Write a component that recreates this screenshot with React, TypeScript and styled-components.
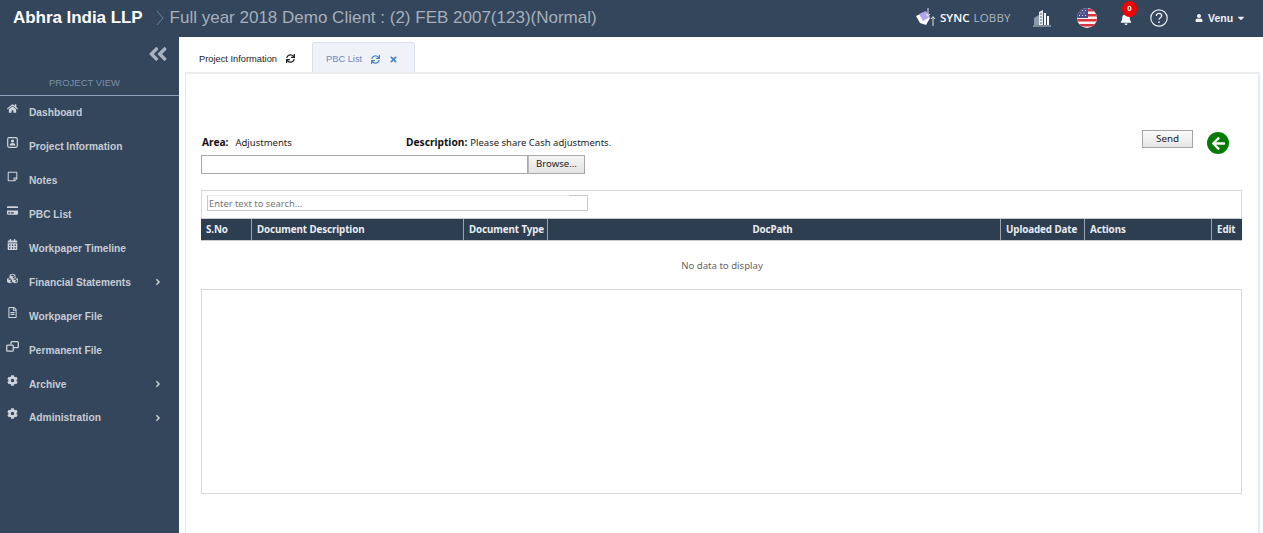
import React from "react";
import styled, { createGlobalStyle } from "styled-components";
import {
  FaHome, FaRegStickyNote, FaCreditCard, FaCalendarAlt, FaCubes, FaRegFileAlt, FaCog,
  FaAngleRight, FaSync, FaTimes, FaUser, FaCaretDown, FaBell, FaAngleDoubleLeft, FaArrowLeft,
} from "react-icons/fa";

const Global = createGlobalStyle`
  html, body { margin: 0; padding: 0; height: 100%; background: #fff; overflow: hidden; }
  #root { height: 533px; }
  * { box-sizing: border-box; }
`;

const Page = styled.div`
  width: 1263px; height: 533px; display: grid; grid-template-rows: 37px 1fr; overflow: hidden;
  font-family: "Liberation Sans", Arial, sans-serif;
`;
const TopBar = styled.header`
  background: #33465c; display: flex; align-items: center; padding: 0 0 2px 13px;
`;
const Brand = styled.div`
  color: #fff; font-size: 17px; font-weight: 700; letter-spacing: -0.05px; white-space: nowrap;
`;
const Crumb = styled.div`
  color: #a6afba; font-size: 17px; margin-left: 13px; display: flex; align-items: center; gap: 6px; white-space: nowrap;
`;
const Tools = styled.div`
  margin-left: auto; display: flex; align-items: center; height: 100%; color: #fff;
`;
const Logo = styled.div`
  display: flex; align-items: center; width: 116px; gap: 2px; font-size: 11.5px; font-family: "Open Sans", sans-serif;
  color: #fff; white-space: nowrap;
  b { font-weight: 600; }
  span { color: #aeb7c2; margin-left: 4px; letter-spacing: 0.2px; }
`;
const ToolIcon = styled.div<{ $w: number }>`
  width: ${(p) => p.$w}px; display: flex; align-items: center; position: relative;
`;
const Bell = styled(FaBell)`
  margin-top: 2px;
`;
const Badge = styled.span`
  position: absolute; left: 2px; top: -10px; width: 15px; height: 16px; border-radius: 50%;
  background: #f00000; color: #fff; font-size: 8px; font-weight: 700; text-align: center; line-height: 15px;
`;
const User = styled.div`
  display: flex; align-items: center; gap: 5px; font-size: 10.5px; font-weight: 700; width: 68px; color: #eef1f4;
`;
const Caret = styled(FaCaretDown)`
  margin-left: -2px;
`;
const Body = styled.div`
  display: grid; grid-template-columns: 179px 1fr; min-height: 0;
`;
const Side = styled.aside`
  background: #33465c; color: #c9ced5;
`;
const Collapse = styled.div`
  height: 36px; display: flex; justify-content: flex-end; align-items: center; padding: 0 10px 3px 0; color: #a9b3bf; font-size: 22px;
`;
const SideTitle = styled.div`
  height: 23px; text-align: center; font-size: 9.5px; color: #7d90a7; border-bottom: 1px solid #8ba0bb;
  padding: 3.5px 10px 0 0;
`;
const Nav = styled.nav`
  display: flex; flex-direction: column;
`;
const NavItem = styled.div`
  height: 33.9px; display: grid; grid-template-columns: 29px 1fr 26px; align-items: center;
  font-size: 10.2px; font-weight: 700; color: #c7ccd3;
`;
const NavIcon = styled.span`
  display: flex; justify-content: center; padding: 0 4px 8px 0; color: #d0d5db; font-size: 11px;
`;
const Content = styled.main`
  background: #fff; display: flex; flex-direction: column; min-width: 0; padding-left: 6px;
`;
const TabBar = styled.div`
  height: 35px; display: flex; align-items: flex-end;
`;
const Tab = styled.div<{ $active?: boolean }>`
  height: 30px; display: flex; align-items: center; gap: 9px; font-size: 9.3px; white-space: nowrap;
  padding: 3px 0 0 ${(p) => (p.$active ? 13 : 14)}px;
  width: ${(p) => (p.$active ? 103 : 127)}px;
  color: ${(p) => (p.$active ? "#6f86c9" : "#222")};
  background: ${(p) => (p.$active ? "#eff3f8" : "transparent")};
  ${(p) => (p.$active ? "border: 1px solid #d9e2ec; border-bottom: 0; border-radius: 3px 3px 0 0;" : "")}
  svg { font-size: 9px; color: ${(p) => (p.$active ? "#4f83c9" : "#222")}; }
`;
const Panel = styled.section`
  flex: 1; margin-right: 3px; border-top: 2px solid #ececec; border-left: 1px solid #e6e8eb; border-right: 2px solid #e3edf7;
  padding: 57px 16px 0 15px; font-family: "Noto Sans", "Open Sans", sans-serif; color: #222;
`;
const FormGrid = styled.div`
  display: grid; grid-template-columns: 1fr auto; height: 59px;
`;
const Meta = styled.div`
  display: grid; grid-template-columns: 204px 1fr; font-size: 9.5px; line-height: 14px; padding: 4px 0 0 1px;
  b { font-weight: 700; font-size: 10.2px; color: #111; margin-right: 7px; }
`;
const Desc = styled.div`
  b { margin-right: 3px; }
`;
const FileRow = styled.div`
  display: flex; height: 19px; margin-top: 5px;
`;
const FileInput = styled.div`
  width: 327px; border: 1px solid #a9a9a9; background: #fff;
`;
const Browse = styled.div`
  width: 57px; border: 1px solid #a9a9a9; border-left: 1px solid #bbb; background: linear-gradient(#f5f5f5, #e4e4e4);
  font-size: 9.6px; text-align: center; line-height: 16px; color: #222;
`;
const Actions = styled.div`
  display: flex; gap: 14px; align-items: flex-start; padding-right: 13px; margin-top: -1px;
`;
const SendBtn = styled.div`
  width: 51px; height: 18px; border: 1px solid #a5a5a5; background: linear-gradient(#fafafa, #e6e6e6);
  font-size: 9.8px; line-height: 16px; text-align: center;
`;
const Back = styled.div`
  width: 22px; height: 22px; margin-top: 2px; border-radius: 50%; background: #057b05; color: #fff;
  display: flex; align-items: center; justify-content: center; font-size: 15px;
`;
const Grid = styled.div`
  border: 1px solid #d9d9d9; border-bottom: 0;
`;
const SearchRow = styled.div`
  height: 27px; padding: 4px 0 0 5px;
`;
const SearchBox = styled.div`
  width: 381px; height: 16px; border: 1px solid #c8c8c8; border-top-color: #eeeeee; font-size: 9.4px; color: #777;
  line-height: 16px; padding-left: 1px; position: relative;
`;
const Notch = styled.span`
  position: absolute; top: -1px; right: 0; width: 18px; height: 1px; background: #c8c8c8;
`;
const Head = styled.div`
  margin: 0 -1px; height: 23px; background: #2d3e50; display: grid;
  grid-template-columns: 51px 212px 84px 453px 84px 127px 31px;
  border-top: 1px solid #c9c9c9; border-bottom: 1px solid #c9c9c9;
`;
const HeadCell = styled.div<{ $center?: boolean }>`
  color: #e9edf2; font-size: 9.8px; font-weight: 700; line-height: 21px; white-space: nowrap;
  padding: ${(p) => (p.$center ? "0 3px 0 0" : "0 0 0 5px")};
  border-right: 1px solid #9aa3ad; letter-spacing: -0.1px;
  text-align: ${(p) => (p.$center ? "center" : "left")};
  &:last-child { border-right: 0; }
`;
const Empty = styled.div`
  height: 48px; text-align: center; font-size: 9.6px; color: #666; padding: 18px 0 0 1px;
`;
const BigBox = styled.div`
  height: 205px; border: 1px solid #d9d9d9;
`;

const SvgIcon = styled.svg`
  display: block;
`;

const ProjectIcon = () => (
  <SvgIcon width="11" height="11" viewBox="0 0 11 11">
    <rect x="0.7" y="0.7" width="9.6" height="9.6" rx="1.5" fill="none" stroke="#d0d5db" strokeWidth="1.2" />
    <circle cx="5.5" cy="4" r="1.6" fill="#d0d5db" />
    <path d="M2.6 8.6c0-2 1.300-2.700 2.900-2.700s2.900.7 2.900 2.700z" fill="#d0d5db" />
  </SvgIcon>
);
const PermanentIcon = () => (
  <SvgIcon width="13" height="11" viewBox="0 0 13 11">
    <rect x="0.7" y="4.2" width="6.6" height="6" rx="1" fill="none" stroke="#d0d5db" strokeWidth="1.3" />
    <path d="M5 3.500V1.700a1 1 0 0 1 1-1h5.300a1 1 0 0 1 1 1v4a1 1 0 0 1-1 1H8" fill="none" stroke="#d0d5db" strokeWidth="1.300" />
  </SvgIcon>
);
const SyncLogo = () => (
  <SvgIcon width="22" height="20" viewBox="0 0 22 20">
    <path d="M0 8 9 4l5 6-4 7-6-2z" fill="#fff" />
    <path d="M3 6l7-3 4 6-7 4z" fill="#b3a5ec" />
    <path d="M12 0v8M10 6l2 2.400L14 6M17 18V9M15 11l2-2.400 2 2.400" fill="none" stroke="#dfe3e8" strokeWidth="1" />
  </SvgIcon>
);
const Building = () => (
  <SvgIcon width="20" height="18" viewBox="0 0 20 18">
    <path d="M1 17h18" stroke="#c7ced6" strokeWidth="1" />
    <path d="M2 16V9l5-3v10z" fill="#8d9aaa" />
    <path d="M7 16V3l4-2v15z" fill="#e6e9ed" />
    <path d="M12 16V4h2v12zM15 16V7h2v9z" fill="#f4f5f7" />
    <path d="M8 5h2M8 8h2M8 11h2M8 14h2" stroke="#33465c" strokeWidth="0.8" />
  </SvgIcon>
);
const Flag = () => (
  <SvgIcon width="20" height="20" viewBox="0 0 20 20">
    <defs><clipPath id="flagc"><circle cx="10" cy="10" r="10" /></clipPath></defs>
    <g clipPath="url(#flagc)">
      <rect width="20" height="20" fill="#f7f3f3" />
      <path d="M0 1h20v2.400H0zM0 6h20v2.400H0zM0 11h20v2.400H0zM0 16h20v2.400H0z" fill="#d8333f" />
      <rect width="11" height="10" fill="#4a4f87" />
      <path d="M2 2.500h1M5 2.500h1M8 2.500h1M3.500 5h1M6.500 5h1M2 7.500h1M5 7.500h1M8 7.500h1" stroke="#dfe0ee" strokeWidth="1" />
    </g>
  </SvgIcon>
);
const Help = () => (
  <SvgIcon width="18" height="18" viewBox="0 0 18 18">
    <circle cx="9" cy="9" r="8.2" fill="none" stroke="#e9ecf0" strokeWidth="1.2" />
    <path d="M6.300 7c0-1.700 1.200-2.600 2.700-2.600s2.700.9 2.700 2.300c0 2-2.700 2-2.700 4.100" fill="none" stroke="#e9ecf0" strokeWidth="1.300" />
    <rect x="8.200" y="12.400" width="1.600" height="1.600" fill="#e9ecf0" />
  </SvgIcon>
);
const Chevron = () => (
  <SvgIcon width="8" height="16" viewBox="0 0 8 16">
    <path d="M1 1l6 7-6 7" fill="none" stroke="#6f8094" strokeWidth="1" />
  </SvgIcon>
);

const items: { label: string; icon: React.ReactNode; more?: boolean }[] = [
  { label: "Dashboard", icon: <FaHome /> },
  { label: "Project Information", icon: <ProjectIcon /> },
  { label: "Notes", icon: <FaRegStickyNote /> },
  { label: "PBC List", icon: <FaCreditCard /> },
  { label: "Workpaper Timeline", icon: <FaCalendarAlt /> },
  { label: "Financial Statements", icon: <FaCubes />, more: true },
  { label: "Workpaper File", icon: <FaRegFileAlt /> },
  { label: "Permanent File", icon: <PermanentIcon /> },
  { label: "Archive", icon: <FaCog />, more: true },
  { label: "Administration", icon: <FaCog />, more: true },
];

const columns: { label: string; center?: boolean }[] = [
  { label: "S.No" },
  { label: "Document Description" },
  { label: "Document Type" },
  { label: "DocPath", center: true },
  { label: "Uploaded Date" },
  { label: "Actions" },
  { label: "Edit" },
];

export default function App() {
  return (
    <Page>
      <Global />
      <TopBar>
        <Brand>Abhra India LLP</Brand>
        <Crumb>
          <Chevron />
          Full year 2018 Demo Client : (2) FEB 2007(123)(Normal)
        </Crumb>
        <Tools>
          <Logo>
            <SyncLogo />
            <div><b>SYNC</b><span>LOBBY</span></div>
          </Logo>
          <ToolIcon $w={45}><Building /></ToolIcon>
          <ToolIcon $w={43}><Flag /></ToolIcon>
          <ToolIcon $w={30}>
            <Bell size={12} />
            <Badge>0</Badge>
          </ToolIcon>
          <ToolIcon $w={45}><Help /></ToolIcon>
          <User>
            <FaUser size={8} />
            Venu
            <Caret size={10} />
          </User>
        </Tools>
      </TopBar>
      <Body>
        <Side>
          <Collapse><FaAngleDoubleLeft /></Collapse>
          <SideTitle>PROJECT VIEW</SideTitle>
          <Nav>
            {items.map((it) => (
              <NavItem key={it.label}>
                <NavIcon>{it.icon}</NavIcon>
                <span>{it.label}</span>
                {it.more ? <FaAngleRight size={10} /> : <span />}
              </NavItem>
            ))}
          </Nav>
        </Side>
        <Content>
          <TabBar>
            <Tab>Project Information <FaSync /></Tab>
            <Tab $active>PBC List <FaSync /> <FaTimes /></Tab>
          </TabBar>
          <Panel>
            <FormGrid>
              <div>
                <Meta>
                  <div><b>Area:</b><span>Adjustments</span></div>
                  <Desc><b>Description:</b><span>Please share Cash adjustments.</span></Desc>
                </Meta>
                <FileRow>
                  <FileInput />
                  <Browse>Browse...</Browse>
                </FileRow>
              </div>
              <Actions>
                <SendBtn>Send</SendBtn>
                <Back><FaArrowLeft /></Back>
              </Actions>
            </FormGrid>
            <Grid>
              <SearchRow>
                <SearchBox><Notch />Enter text to search...</SearchBox>
              </SearchRow>
              <Head>
                {columns.map((c) => (
                  <HeadCell key={c.label} $center={c.center}>{c.label}</HeadCell>
                ))}
              </Head>
            </Grid>
            <Empty>No data to display</Empty>
            <BigBox />
          </Panel>
        </Content>
      </Body>
    </Page>
  );
}
